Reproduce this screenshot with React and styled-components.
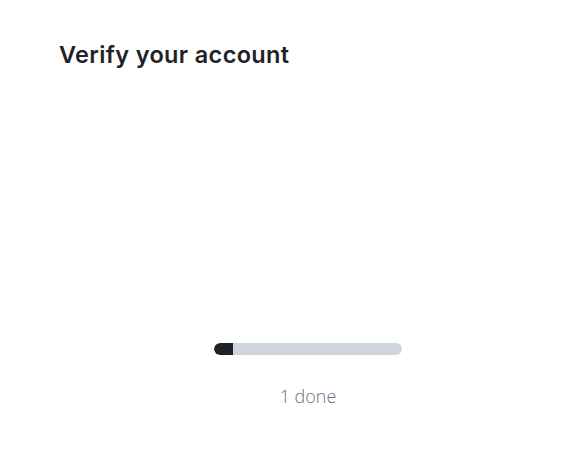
import React from "react";
import styled, { createGlobalStyle } from "styled-components";

const Global = createGlobalStyle`
  html, body { margin: 0; padding: 0; background: #ffffff; }
  body { font-family: "Inter", "Liberation Sans", sans-serif; }
`;

const Page = styled.main`
  width: 564px;
  height: 465px;
  box-sizing: border-box;
  padding: 40px 7px 0 59px;
  display: flex;
  flex-direction: column;
`;

const Title = styled.h1`
  margin: 0;
  font-family: "Inter", "Liberation Sans", sans-serif;
  font-weight: 600;
  font-size: 23.5px;
  line-height: 30px;
  letter-spacing: 0.35px;
  color: #1f2328;
`;

const Progress = styled.section`
  margin-top: 273px;
  display: flex;
  flex-direction: column;
  align-items: center;
  gap: 29px;
`;

const Track = styled.div`
  width: 188px;
  height: 12px;
  border-radius: 6px;
  background: #d0d5dc;
  overflow: hidden;
  display: flex;
`;

const Fill = styled.div`
  height: 100%;
  background: #1f2328;
  border-radius: 6px 0 0 6px;
`;

const Label = styled.p`
  margin: 0;
  font-family: "Open Sans", "Liberation Sans", sans-serif;
  font-weight: 300;
  font-size: 18px;
  line-height: 24px;
  color: #6b7087;
`;

export default function App() {
  const pct = 10;
  return (
    <>
      <Global />
      <Page>
        <Title>Verify your account</Title>
        <Progress>
          <Track>
            <Fill style={{ width: `${pct}%` }} />
          </Track>
          <Label>1 done</Label>
        </Progress>
      </Page>
    </>
  );
}
